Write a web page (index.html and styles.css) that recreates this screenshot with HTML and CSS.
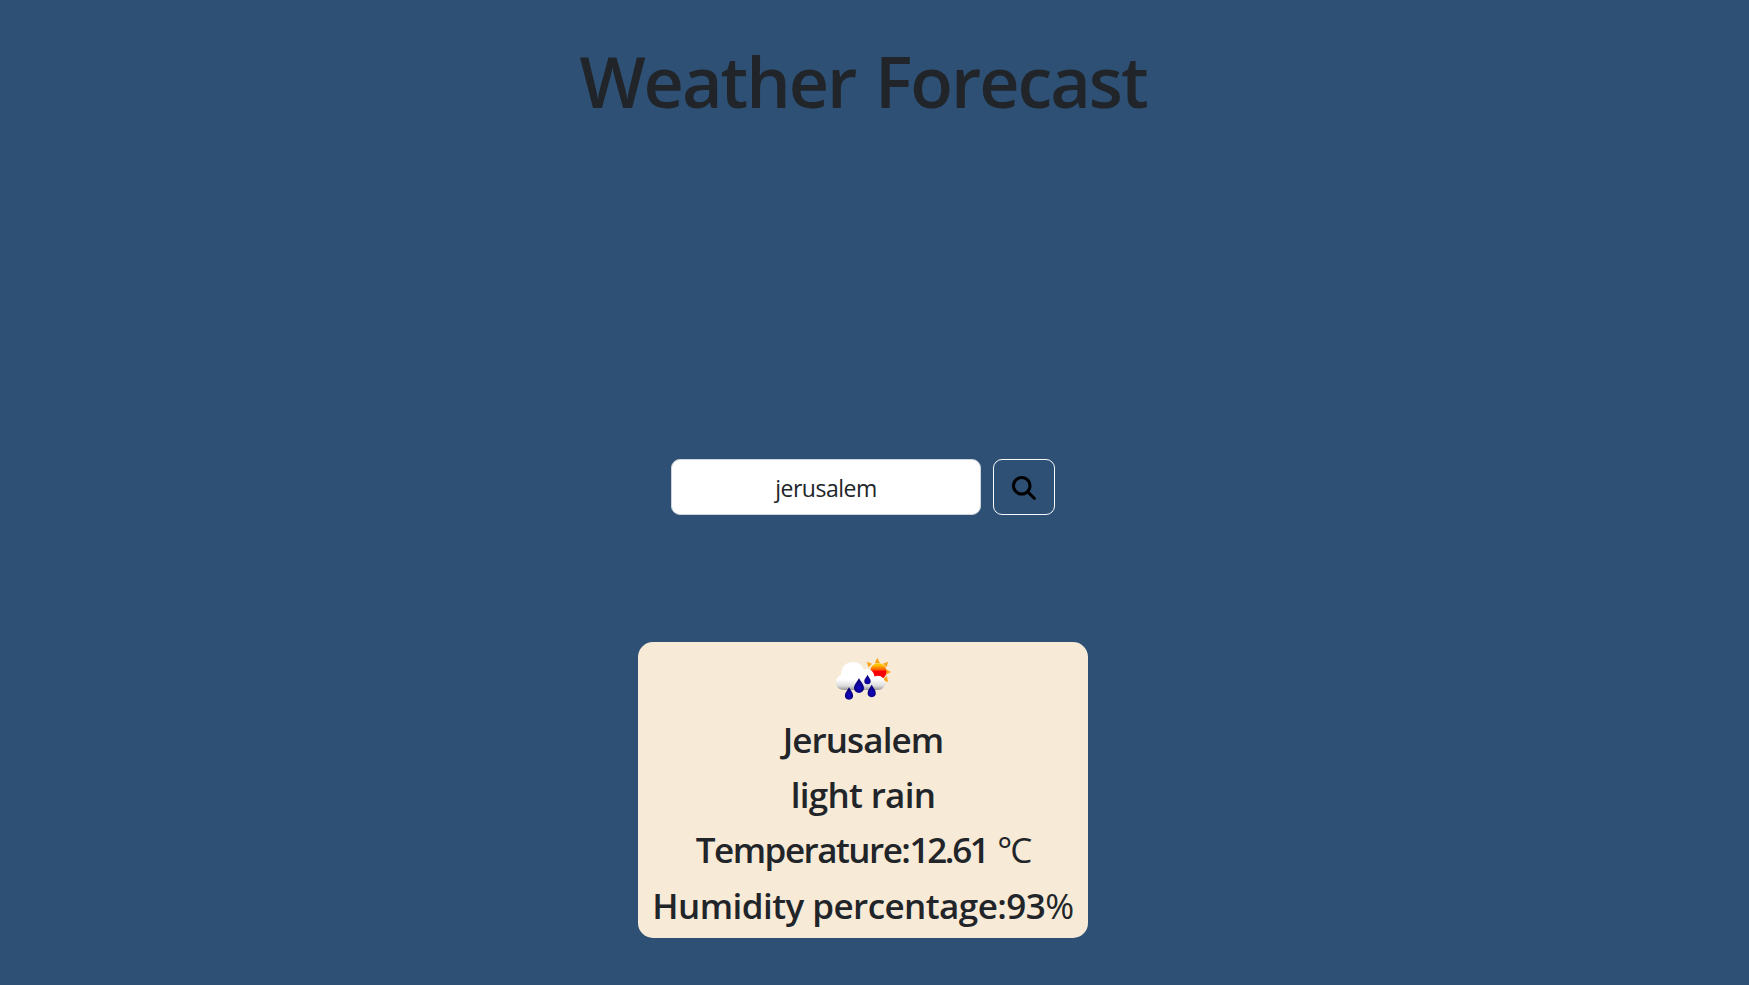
FILE: index.html
```html
<!DOCTYPE html>
<html lang="en">
<head>
<meta charset="utf-8">
<title>Weather Forecast</title>
<link rel="stylesheet" href="styles.css">
</head>
<body>
<main class="app">
  <h1 class="title">Weather Forecast</h1>
  <form class="search">
    <input class="search-input" type="text" value="jerusalem" aria-label="City">
    <button class="search-button" type="button" aria-label="Search">
      <svg class="search-icon" viewBox="0 0 512 512"><path d="M416 208c0 45.9-14.9 88.3-40 122.7L502.6 457.4c12.5 12.5 12.5 32.8 0 45.3s-32.8 12.5-45.3 0L330.7 376c-34.4 25.2-76.8 40-122.7 40C93.1 416 0 322.9 0 208S93.1 0 208 0S416 93.1 416 208zM208 352a144 144 0 1 0 0-288 144 144 0 1 0 0 288z"/></svg>
    </button>
  </form>
  <section class="card">
    <svg class="weather-icon" viewBox="13 16 60 46">
      <defs>
        <linearGradient id="sun" x1="0" y1="0" x2="0" y2="1"><stop offset="0.12" stop-color="#ffc400"/><stop offset="0.4" stop-color="#ff5a00"/><stop offset="0.5" stop-color="#fa0000"/></linearGradient>
        <linearGradient id="cloud" gradientUnits="userSpaceOnUse" x1="0" y1="22" x2="0" y2="51"><stop offset="0.6" stop-color="#fff"/><stop offset="0.82" stop-color="#dcdcdc"/><stop offset="1" stop-color="#888"/></linearGradient>
        <radialGradient id="drop" cx="0.5" cy="0.65" r="0.6"><stop offset="0" stop-color="#1408c8"/><stop offset="1" stop-color="#080066"/></radialGradient>
        <path id="raindrop" d="M0-7.5C1.5-4 5-1 5 2.5A5 5 0 0 1-5 2.5C-5-1-1.5-4 0-7.5z" fill="url(#drop)"/>
      </defs>
      <path fill="#f9a51a" d="M54.8 23 57.3 17.8 59.9 23zM62.8 23.700 68.1 21.700 66.600 27.200zM66 29.3 71 32 66 34.700zM67 36 68 42 62 40zM52 23.7 46.8 21.700 48.500 27.400z"/>
      <circle cx="58.3" cy="31.4" r="8.2" fill="url(#sun)"/>
      <path fill="url(#cloud)" d="M24 50C19 50 16 47 16 43c0-4 2-7 5-8C21 27 26 22 33 22c6 0 9 3 10.500 7.500C49 27.500 54 31 54.500 36.500 60 34 65 38 65 43c0 4-3 7-7 7z"/>
      <use href="#raindrop" transform="translate(39 45.5)"/>
      <use href="#raindrop" transform="translate(47.5 39.5) scale(.64)"/>
      <use href="#raindrop" transform="translate(29 53.500) scale(.82)"/>
      <use href="#raindrop" transform="translate(51.700 51) scale(.82)"/>
    </svg>
    <div class="line city">Jerusalem</div>
    <div class="line sky">light rain</div>
    <div class="line temperature">Temperature:<span class="value">12.61</span> <span class="unit">°C</span></div>
    <div class="line humidity">Humidity percentage:93<span class="percent">%</span></div>
  </section>
</main>
</body>
</html>
```

FILE: styles.css
```css
body {
  margin: 0;
  background: #2d5074;
  color: #212529;
  font-family: "Open Sans", "Noto Sans", sans-serif;
  overflow: hidden;
}
.app {
  width: 1726px;
  display: flex;
  flex-direction: column;
  align-items: center;
  padding-top: 32px;
}
.title {
  margin: 0;
  height: 98px;
  font-size: 70px;
  line-height: 98px;
  font-weight: 600;
  letter-spacing: -2px;
  word-spacing: 3.5px;
  white-space: nowrap;
}
.search {
  display: flex;
  gap: 12px;
  margin-top: 329px;
}
.search-input {
  box-sizing: border-box;
  width: 310px;
  height: 56px;
  padding: 4px 12px 2px;
  border: 1px solid #ced4da;
  border-radius: 9px;
  background: #fff;
  color: #212529;
  font: 400 23px "Open Sans", "Noto Sans", sans-serif;
  letter-spacing: -0.5px;
  text-align: center;
}
.search-button {
  box-sizing: border-box;
  width: 62px;
  height: 56px;
  padding: 2px 0 0;
  display: flex;
  align-items: center;
  justify-content: center;
  border: 1px solid #f8f9fa;
  border-radius: 9px;
  background: transparent;
}
.search-icon {
  width: 24px;
  height: 24px;
}
.card {
  box-sizing: border-box;
  width: 450px;
  height: 296px;
  margin-top: 127px;
  padding-top: 14px;
  display: flex;
  flex-direction: column;
  align-items: center;
  border-radius: 15px;
  background: #f7ead6;
}
.weather-icon {
  width: 60px;
  height: 46px;
  margin-bottom: 10px;
}
.line {
  height: 55.2px;
  font-size: 35px;
  line-height: 55.2px;
  font-weight: 600;
  letter-spacing: -0.9px;
  white-space: nowrap;
}
.sky {
  letter-spacing: -0.7px;
}
.temperature {
  letter-spacing: -1.5px;
  word-spacing: 2px;
}
.humidity {
  letter-spacing: -0.55px;
}
.value {
  letter-spacing: -2.3px;
}
.unit {
  font-weight: 400;
  letter-spacing: -2px;
}
.percent {
  font-weight: 400;
}
```
